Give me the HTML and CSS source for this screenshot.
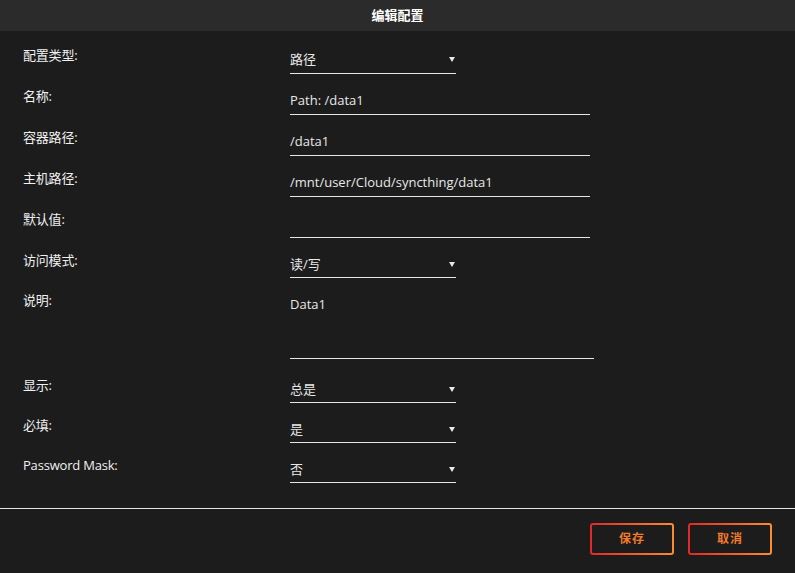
FILE: index.html
```html
<!DOCTYPE html>
<html>
<head>
<meta charset="utf-8">
<title>编辑配置</title>
<link rel="stylesheet" href="styles.css">
</head>
<body>
<div class="title">编辑配置</div>
<div class="form">
<div class="row"><div class="lbl">配置类型:</div><div class="field sel">路径<span class="arrow"></span></div></div>
<div class="row"><div class="lbl">名称:</div><div class="field txt">Path: /data1</div></div>
<div class="row"><div class="lbl">容器路径:</div><div class="field txt">/data1</div></div>
<div class="row"><div class="lbl">主机路径:</div><div class="field txt">/mnt/user/Cloud/syncthing/data1</div></div>
<div class="row"><div class="lbl">默认值:</div><div class="field txt"></div></div>
<div class="row short"><div class="lbl">访问模式:</div><div class="field sel">读/写<span class="arrow"></span></div></div>
<div class="row tall"><div class="lbl">说明:</div><div class="field area">Data1</div></div>
<div class="row short gap"><div class="lbl">显示:</div><div class="field sel">总是<span class="arrow"></span></div></div>
<div class="row short"><div class="lbl">必填:</div><div class="field sel">是<span class="arrow"></span></div></div>
<div class="row short"><div class="lbl">Password Mask:</div><div class="field sel">否<span class="arrow"></span></div></div>
</div>
<div class="footer">
<div class="btn">保存</div>
<div class="btn">取消</div>
</div>
</body>
</html>
```

FILE: styles.css
```css
body{
margin:0;
background:#1c1c1c;
color:#f0f0f0;
font-family:"Open Sans","Noto Sans CJK SC",sans-serif;
font-size:13px;
}
.title{
height:31px;
line-height:31px;
background:#2b2b2b;
text-align:center;
font-weight:bold;
font-size:13px;
color:#fff;
}
.form{
padding:2px 0 0 23px;
}
.row{
display:flex;
height:41px;
}
.row.short{
height:40px;
}
.row.tall{
height:81px;
}
.row.gap{
margin-top:4px;
}
.lbl{
width:267px;
padding-top:14px;
line-height:16px;
letter-spacing:-0.2px;
}
.field{
box-sizing:border-box;
height:100%;
padding-top:18px;
line-height:16px;
border-bottom:1px solid #e6e6e6;
color:#e8e8e8;
}
.sel{
width:166px;
display:flex;
justify-content:space-between;
}
.txt{
width:300px;
}
.area{
width:304px;
}
.arrow{
width:0;
height:0;
margin:6px 1px 0 0;
border-top:5px solid #e8e8e8;
border-left:3px solid transparent;
border-right:3px solid transparent;
}
.footer{
margin-top:25px;
border-top:1px solid #e6e6e6;
padding:14px 23px 18px 0;
display:flex;
justify-content:flex-end;
gap:14px;
}
.btn{
box-sizing:border-box;
width:84px;
height:32px;
line-height:28px;
text-align:center;
font-weight:bold;
font-size:12px;
letter-spacing:1px;
color:#f07a2c;
border:2px solid transparent;
border-radius:3px;
background:linear-gradient(#1c1c1c,#1c1c1c) padding-box,linear-gradient(90deg,#e22828,#ff8c2f) border-box;
}
```
